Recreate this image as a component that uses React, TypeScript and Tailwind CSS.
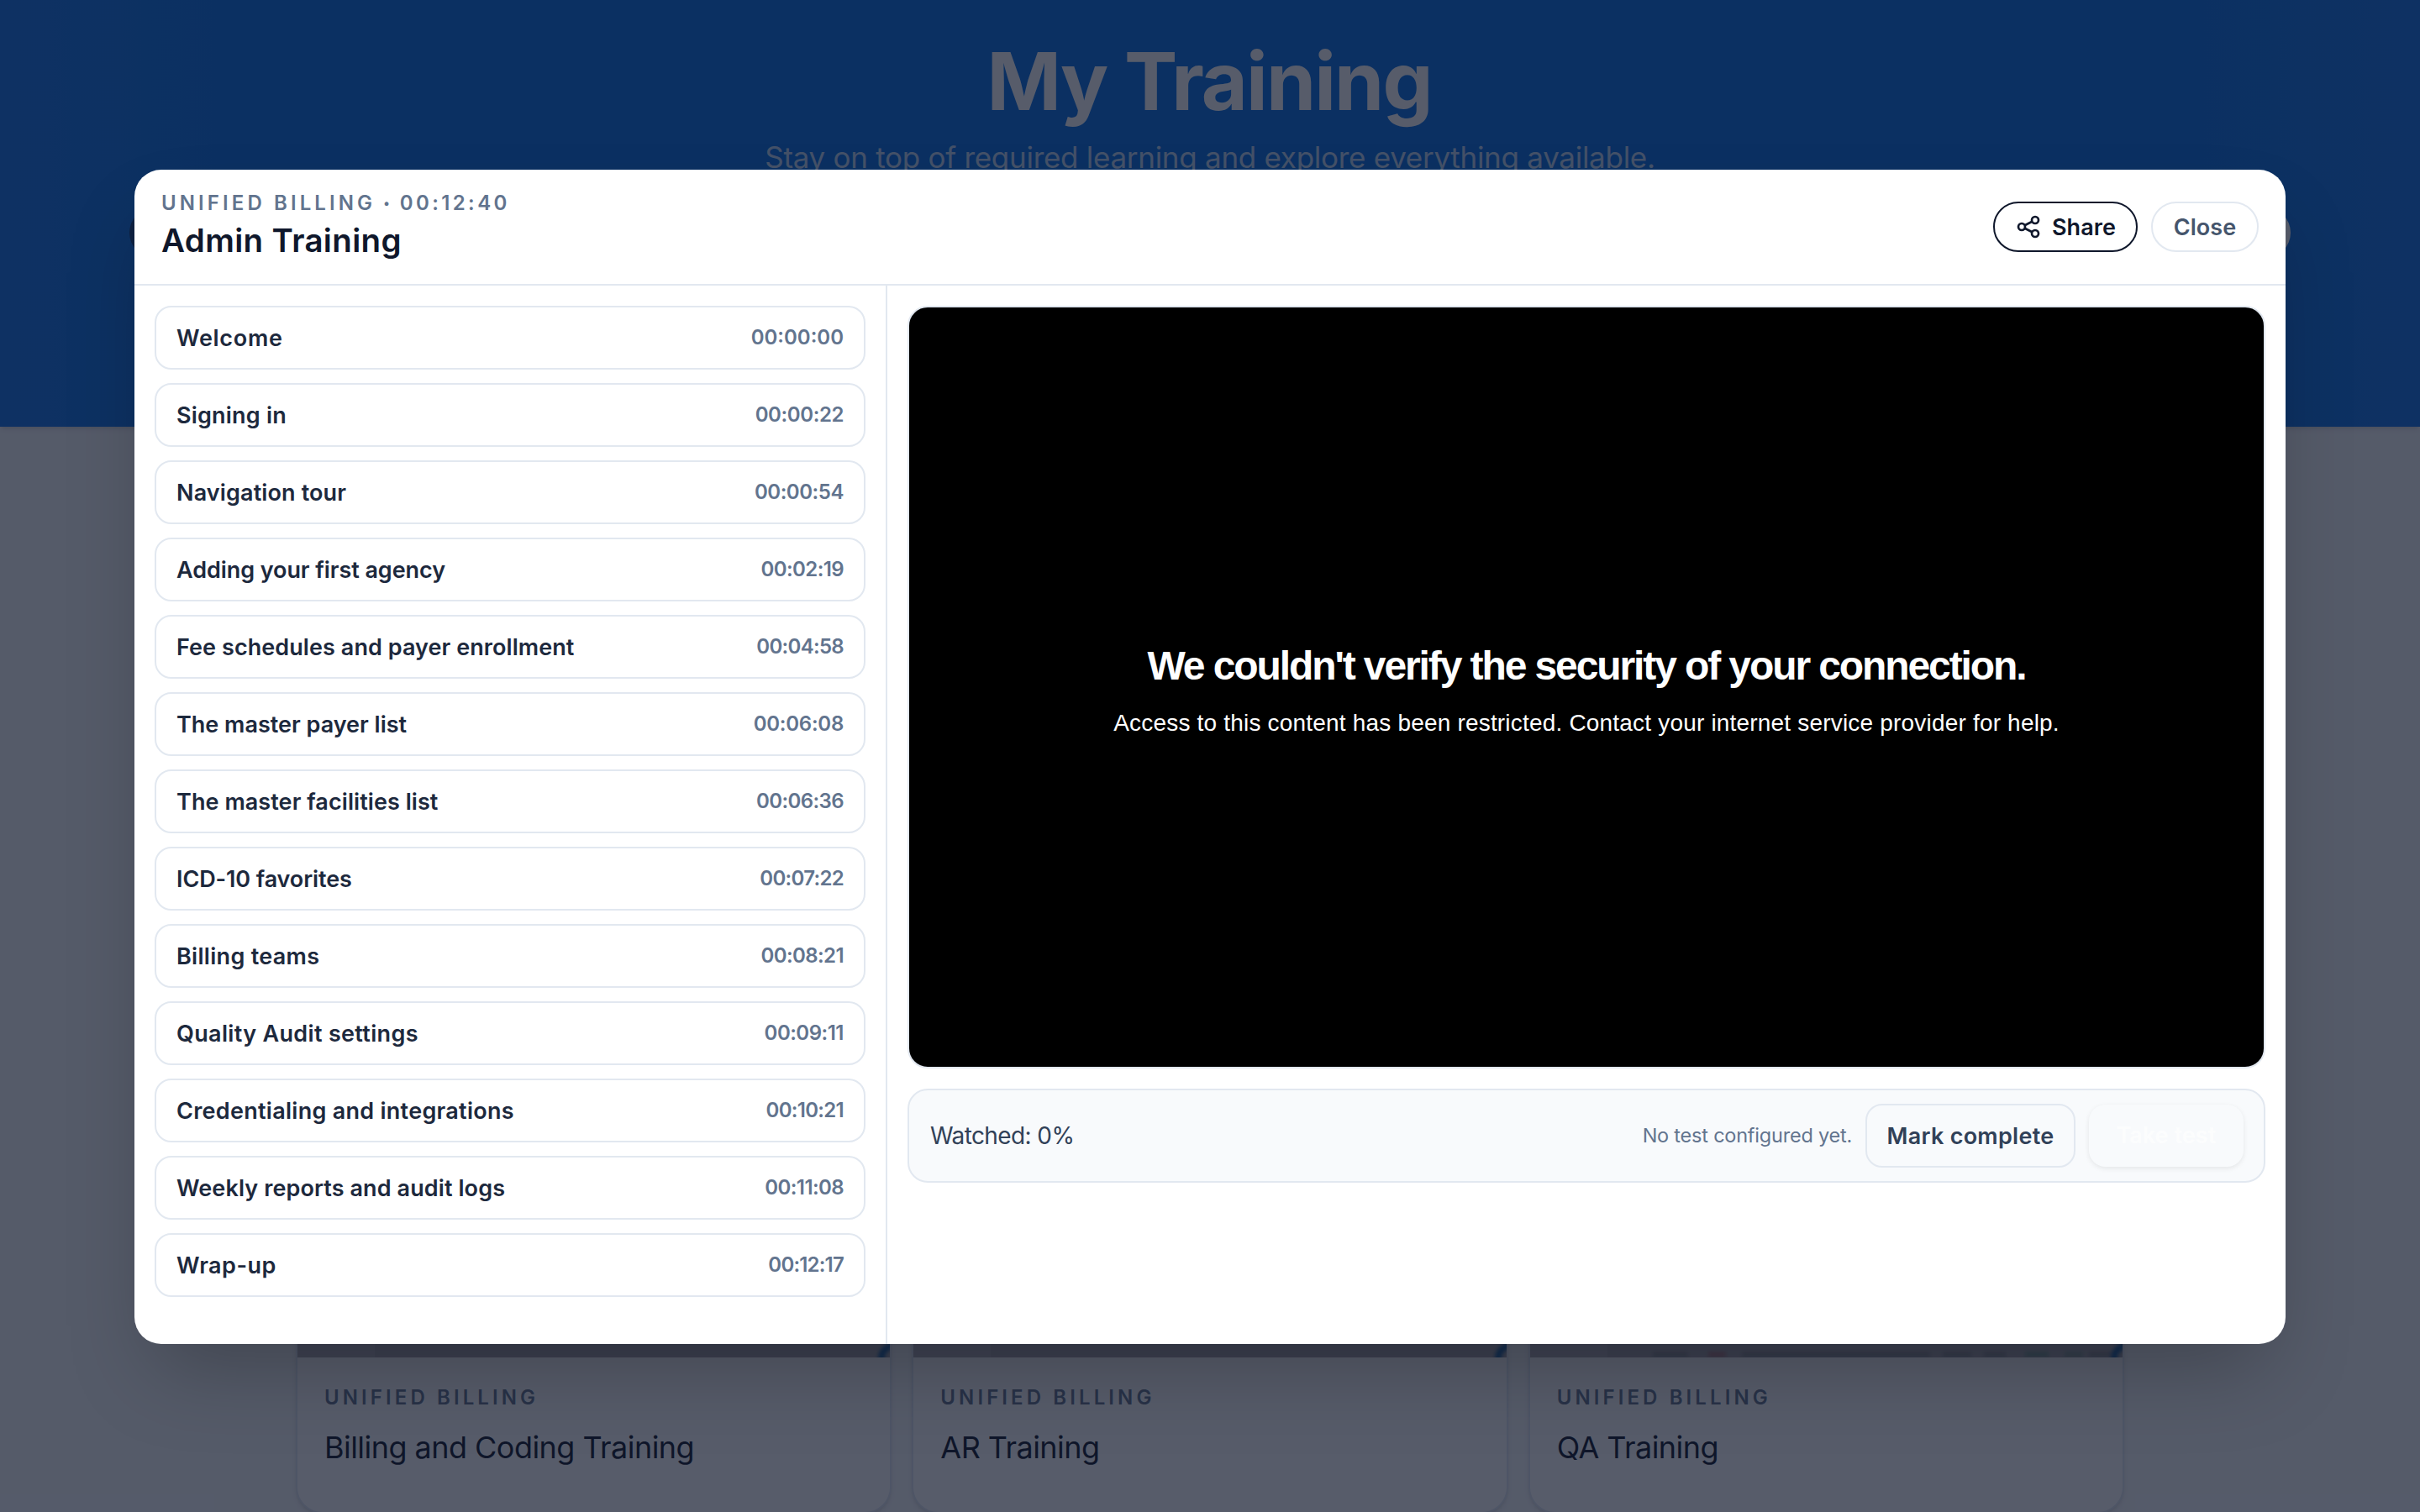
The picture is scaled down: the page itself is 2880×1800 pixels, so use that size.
import { useState } from "react";

type Chapter = {
  title: string;
  time: string;
  titleTracking: string;
  timeTracking: string;
};

const chapters: Chapter[] = [
  { title: "Welcome", time: "00:00:00", titleTracking: "tracking-[0.7px]", timeTracking: "tracking-[0px]" },
  { title: "Signing in", time: "00:00:22", titleTracking: "tracking-[0.2px]", timeTracking: "tracking-[-0.4px]" },
  { title: "Navigation tour", time: "00:00:54", titleTracking: "tracking-[0.13px]", timeTracking: "tracking-[-0.45px]" },
  { title: "Adding your first agency", time: "00:02:19", titleTracking: "tracking-[-0.07px]", timeTracking: "tracking-[-0.6px]" },
  { title: "Fee schedules and payer enrollment", time: "00:04:58", titleTracking: "tracking-[0.07px]", timeTracking: "tracking-[-0.7px]" },
  { title: "The master payer list", time: "00:06:08", titleTracking: "tracking-[0px]", timeTracking: "tracking-[-0.25px]" },
  { title: "The master facilities list", time: "00:06:36", titleTracking: "tracking-[0.07px]", timeTracking: "tracking-[-0.6px]" },
  { title: "ICD-10 favorites", time: "00:07:22", titleTracking: "tracking-[-0.1px]", timeTracking: "tracking-[-0.7px]" },
  { title: "Billing teams", time: "00:08:21", titleTracking: "tracking-[0.3px]", timeTracking: "tracking-[-0.6px]" },
  { title: "Quality Audit settings", time: "00:09:11", titleTracking: "tracking-[0.33px]", timeTracking: "tracking-[-0.5px]" },
  { title: "Credentialing and integrations", time: "00:10:21", titleTracking: "tracking-[0.28px]", timeTracking: "tracking-[-0.7px]" },
  { title: "Weekly reports and audit logs", time: "00:11:08", titleTracking: "tracking-[0.1px]", timeTracking: "tracking-[-0.6px]" },
  { title: "Wrap-up", time: "00:12:17", titleTracking: "tracking-[0.5px]", timeTracking: "tracking-[-0.8px]" },
];

const courses = [
  { title: "Billing and Coding Training", table: false },
  { title: "AR Training", table: false },
  { title: "QA Training", table: true },
];

function ShareIcon() {
  return (
    <svg className="size-8" viewBox="0 0 24 24" fill="none" stroke="currentColor" strokeWidth="2">
      <circle cx="6" cy="12" r="3" />
      <circle cx="18" cy="6" r="3" />
      <circle cx="18" cy="18" r="3" />
      <path d="M8.7 10.7l6.6-3.4M8.7 13.3l6.6 3.4" />
    </svg>
  );
}

function Thumbnail({ table }: { table: boolean }) {
  return (
    <div className="relative flex h-[406px] items-end overflow-hidden bg-[#a4a2a8]">
      <div className="h-full w-[92px] bg-[#adabb1]" />
      {/* last visible row of the table in the preview */}
      {table && (
        <div className="flex h-[7px] pl-[54px] opacity-60 blur-[2px]">
          <div className="w-[42px] bg-[#7c7e84]" />
          <div className="ml-[24px] w-[21px] bg-[#b0626a]" />
          <div className="ml-[19px] w-[224px] bg-[#7c7e84]" />
          <div className="ml-[15px] w-[34px] bg-[#7c7e84]" />
          <div className="ml-[15px] w-[26px] bg-[#7c7e84]" />
          <div className="ml-[23px] w-[28px] bg-[#5f9585]" />
          <div className="ml-[19px] w-[22px] bg-[#6f9589]" />
          <div className="ml-[7px] w-[28px] bg-[#7c7e84]" />
        </div>
      )}
      <div className="absolute -right-[24px] -bottom-[20px] size-[38px] rounded-full border-[8px] border-[#1a5f9c] blur-[2px]" />
    </div>
  );
}

export default function App() {
  const [active, setActive] = useState(-1);

  return (
    <div className="relative h-[1800px] w-[2880px] overflow-hidden bg-slate-50 font-['Inter',sans-serif]">
      {/* HERO */}
      <div className="h-[508px] bg-[linear-gradient(90deg,#0c70e6,#006ce4_12%,#006ce4_88%,#0c70e6)] text-center shadow-md">
        <h1 className="pt-[37px] pr-[2px] text-[95px] leading-[120px] font-bold tracking-[-1.85px] text-white">My Training</h1>
        <p className="pt-[4px] text-[35px] leading-[52px] tracking-[-0.28px] text-white/75">
          Stay on top of required learning and explore everything available.
        </p>
        <div className="mx-[154px] mt-[34px] flex justify-between">
          <div className="size-[60px] rounded-full bg-slate-900/60" />
          <div className="size-[60px] rounded-full bg-white" />
        </div>
      </div>

      {/* COURSE CARDS */}
      <div className="mx-auto mt-[700px] grid w-[2176px] grid-cols-3 gap-6">
        {courses.map((c) => (
          <div key={c.title} className="h-[594px] overflow-hidden rounded-[32px] border-2 border-slate-200 bg-white shadow-md">
            <Thumbnail table={c.table} />
            <div className="px-8 pt-[31px]">
              <div className="text-[24px] leading-[34px] font-semibold tracking-[4.1px] text-slate-500">UNIFIED BILLING</div>
              <div className="mt-[15px] text-[36px] leading-[54px] tracking-[-0.54px] text-slate-900">{c.title}</div>
            </div>
          </div>
        ))}
      </div>

      {/* MODAL */}
      <div className="absolute inset-0 bg-slate-900/70 px-[160px] pt-[202px]">
        <div className="flex h-[1398px] flex-col overflow-hidden rounded-[32px] bg-white shadow-[0_50px_100px_-24px_rgba(0,0,0,0.25)]">
          <div className="flex h-[138px] shrink-0 items-start justify-between border-b-2 border-slate-200 px-8">
            <div className="pt-[23px]">
              <div className="flex text-[24px] leading-[34px] font-semibold text-slate-500">
                <span className="tracking-[4.1px]">UNIFIED BILLING</span>
                <span className="mr-[12px] ml-[9px] text-[15px]">•</span>
                <span className="tracking-[3.4px]">00:12:40</span>
              </div>
              <h2 className="text-[38.5px] leading-[54px] font-semibold tracking-[0.35px] text-slate-900">Admin Training</h2>
            </div>
            <div className="flex gap-4 pt-[38px] text-[27px] font-semibold">
              <button className="flex h-[60px] w-[172px] items-center justify-center gap-3 rounded-full border-2 border-slate-900 text-slate-900">
                <ShareIcon />
                <span className="pt-[2px] tracking-[0.1px]">Share</span>
              </button>
              <button className="h-[60px] w-[128px] rounded-full border-2 border-slate-200 pt-[2px] tracking-[0.1px] text-slate-600">
                Close
              </button>
            </div>
          </div>

          <div className="flex flex-1">
            {/* CHAPTERS */}
            <div className="flex w-[896px] flex-col gap-4 border-r-2 border-slate-200 p-6">
              {chapters.map((c, i) => (
                <button
                  key={c.title}
                  onClick={() => setActive(i)}
                  className={`flex h-[76px] items-center justify-between rounded-[20px] border-2 px-6 ${
                    active === i ? "border-slate-400" : "border-slate-200"
                  }`}
                >
                  <span className={`pt-[2px] text-[27px] font-semibold text-slate-800 ${c.titleTracking}`}>{c.title}</span>
                  <span className={`text-[24px] font-semibold text-slate-500 ${c.timeTracking}`}>{c.time}</span>
                </button>
              ))}
            </div>

            {/* PLAYER */}
            <div className="flex-1 p-6">
              <div className="flex h-[908px] flex-col items-center justify-center rounded-3xl border-2 border-slate-200 bg-black pt-[8px] font-['Liberation_Sans',sans-serif] text-white">
                <div className="text-[48px] leading-[60px] font-bold tracking-[-2.1px]">
                  We couldn't verify the security of your connection.
                </div>
                <div className="mt-[18px] text-[28px] leading-[40px] tracking-[0.19px]">
                  Access to this content has been restricted. Contact your internet service provider for help.
                </div>
              </div>

              <div className="mt-6 flex h-[112px] items-center gap-4 rounded-3xl border-2 border-slate-200 bg-slate-50 px-6">
                <span className="flex-1 pl-px text-[28px] tracking-[-0.6px] text-slate-700">Watched: 0%</span>
                <span className="text-[23.5px] tracking-[-0.22px] text-slate-500">No test configured yet.</span>
                <button className="h-[76px] w-[250px] rounded-[20px] border-2 border-slate-200 pt-[2px] text-[27px] font-semibold tracking-[0.28px] text-slate-700">
                  Mark complete
                </button>
                <button className="h-[74px] w-[184px] rounded-[20px] text-[27px] font-semibold text-white opacity-60 shadow-[0_2px_6px_rgba(0,0,0,0.14)]">
                  Take test
                </button>
              </div>
            </div>
          </div>
        </div>
      </div>
    </div>
  );
}
